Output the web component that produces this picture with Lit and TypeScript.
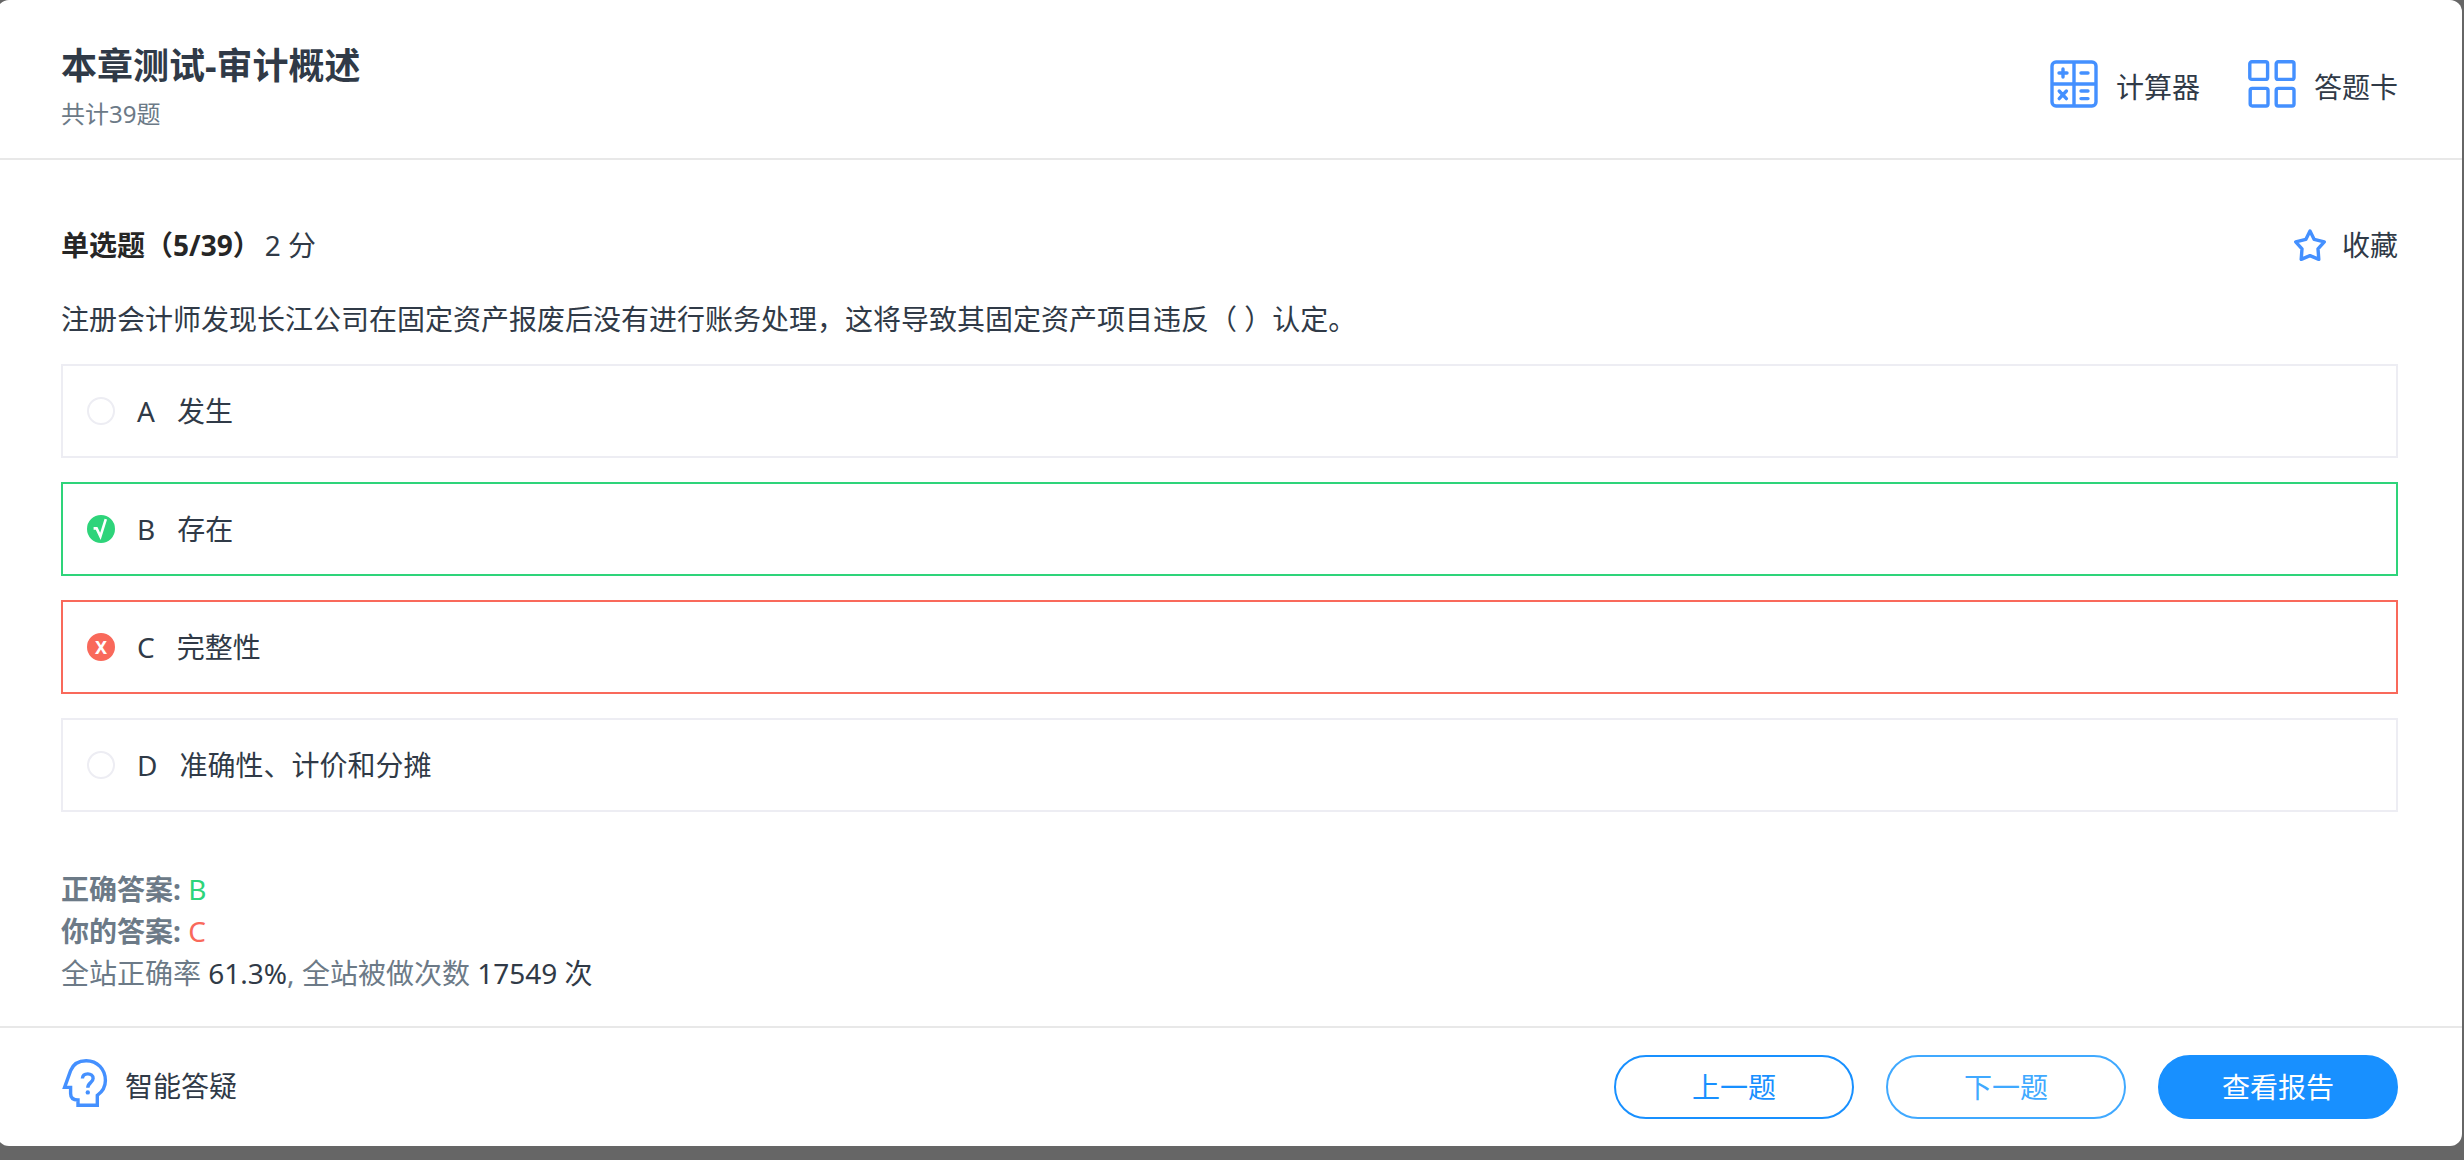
import { LitElement, html, css, svg, nothing } from "lit";
import { customElement, property, state } from "lit/decorators.js";
import { classMap } from "lit/directives/class-map.js";

type Mark = "none" | "right" | "wrong";

interface Option {
  key: string;
  text: string;
  mark: Mark;
}

const calculatorIcon = svg`
  <rect x="2" y="2" width="44" height="44" rx="4" />
  <path d="M24 2V46M2 24H46" />
  <path stroke-linecap="round" d="M13 9V17M9 13H17M31 13H38M9.2 31L16.4 38.6M16.4 31L9.2 38.6M31 31H38M31 38.6H38" />
`;

const gridIcon = svg`
  <rect x="1.8" y="1.8" width="17.8" height="17.6" rx="2" />
  <rect x="28.2" y="1.8" width="17.8" height="17.6" rx="2" />
  <rect x="2.2" y="28.4" width="17.8" height="17.6" rx="2" />
  <rect x="28.2" y="28.4" width="17.8" height="17.6" rx="2" />
`;

const headIcon = svg`
  <path d="M25.2 1.7C17.6 1.7 12 5.4 9.6 11.6L3.6 28.4H9.6V34.5C9.6 38.6 12 41 17 41V46.3H36.3V36.3C42 32.4 44.4 27.4 44.4 21.5C44.4 10.2 36.4 1.7 25.2 1.7Z" />
  <path d="M21.4 19.5C21.6 16.6 23.8 14.9 26.8 14.9C29.8 14.9 32.1 16.7 32.1 19.4C32.1 21.3 31 22.4 29.6 23.6C27.8 25.1 26.8 26.2 26.8 28.8" />
  <circle cx="26.8" cy="33.4" r="2.2" fill="currentColor" stroke="none" />
`;

const starIcon = svg`
  <path
    stroke-linejoin="round"
    d="M16 1.9L20.2 10.4L30.3 12.9L24 19.8L24.8 30.4L16 26.6L7.2 30.4L8 19.8L1.7 12.9L11.8 10.4Z"
  />
`;

@customElement("quiz-option")
export class QuizOption extends LitElement {
  @property({ attribute: false }) option!: Option;
  @property({ type: Boolean }) checked = false;

  static styles = css`
    :host {
      display: block;
    }
    .option {
      display: flex;
      align-items: center;
      gap: 22px;
      padding: 24px;
      border: 2px solid #ededf3;
      line-height: 42px;
    }
    .option.right {
      border-color: #2ed47a;
    }
    .option.wrong {
      border-color: #f9695b;
    }
    .dot {
      display: grid;
      place-items: center;
      width: 28px;
      height: 28px;
    }
    .radio {
      grid-area: 1 / 1;
      box-sizing: border-box;
      appearance: none;
      width: 28px;
      height: 28px;
      margin: 0;
      border: 2px solid #ededf3;
      border-radius: 50%;
    }
    .right .radio {
      border-color: #2ed47a;
      background: #2ed47a;
    }
    .wrong .radio {
      border-color: #f9695b;
      background: #f9695b;
    }
    .sign {
      grid-area: 1 / 1;
      z-index: 1;
      color: #fff;
      font-size: 18px;
      font-weight: 700;
      line-height: 28px;
    }
    .check {
      grid-area: 1 / 1;
      z-index: 1;
      width: 28px;
      height: 28px;
      fill: none;
      stroke: #fff;
      stroke-width: 2.6;
    }
  `;

  private renderMark(mark: Mark) {
    if (mark === "right") {
      return html`<svg class="check" viewBox="0 0 28 28" aria-hidden="true">
        <path d="M6.6 13.4H9.6L13.4 21.4L18.8 4.2" />
      </svg>`;
    }
    return mark === "wrong" ? html`<span class="sign" aria-hidden="true">X</span>` : nothing;
  }

  render() {
    const { key, text, mark } = this.option;
    return html`
      <label class=${classMap({ option: true, right: mark === "right", wrong: mark === "wrong" })}>
        <span class="dot">
          <input class="radio" type="radio" name="answer" .value=${key} .checked=${this.checked} />
          ${this.renderMark(mark)}
        </span>
        <span>${key}</span>
        <span>${text}</span>
      </label>
    `;
  }
}

@customElement("app-root")
export class AppRoot extends LitElement {
  @state() private options: Option[] = [
    { key: "A", text: "发生", mark: "none" },
    { key: "B", text: "存在", mark: "right" },
    { key: "C", text: "完整性", mark: "wrong" },
    { key: "D", text: "准确性、计价和分摊", mark: "none" },
  ];

  static styles = css`
    :host {
      display: flex;
      box-sizing: border-box;
      min-height: 100vh;
      padding: 0 2px 14px 0;
      background: #666;
      color: #303a47;
      font-family: "Noto Sans", "Noto Sans CJK SC", sans-serif;
      font-size: 28px;
      line-height: 42px;
    }
    .card {
      flex: 1;
      display: flex;
      flex-direction: column;
      margin-left: -3px;
      border-radius: 12px;
      background: #fff;
    }
    .header,
    .footer {
      display: flex;
      align-items: flex-start;
      justify-content: space-between;
      padding: 0 64px;
    }
    .header {
      padding-top: 42px;
      padding-bottom: 26px;
      border-bottom: 2px solid #e8e8e8;
    }
    .title {
      margin: 0 0 6px;
      font-size: 36px;
      line-height: 48px;
    }
    .count {
      margin: 0;
      color: #6c7a87;
      font-size: 24px;
      line-height: 36px;
    }
    .tools {
      display: flex;
      gap: 48px;
      padding-top: 18px;
    }
    .tool {
      display: flex;
      align-items: flex-end;
      gap: 16px;
      padding: 0;
      border: 0;
      background: none;
      color: inherit;
      font: inherit;
      cursor: pointer;
    }
    .tools .tool {
      gap: 18px;
    }
    .bar .tool {
      align-items: center;
    }
    .footer .tool {
      padding-top: 4px;
    }
    .icon {
      flex: none;
      width: 48px;
      height: 48px;
      fill: none;
      stroke: currentColor;
      stroke-width: 3.4;
      color: #4490ff;
    }
    .star {
      width: 32px;
      height: 32px;
    }
    .main {
      flex: 1;
      padding: 64px 64px 32px;
    }
    .bar {
      display: flex;
      align-items: center;
      justify-content: space-between;
      margin-bottom: 32px;
    }
    .kind {
      display: flex;
      gap: 4px;
      margin: 0;
      font-size: 28px;
      font-weight: 400;
    }
    .kind-name {
      color: #262626;
      font-weight: 700;
    }
    .question {
      margin: 0 0 24px;
    }
    .options {
      display: grid;
      gap: 24px;
      margin: 0 0 56px;
      padding: 0;
      border: 0;
    }
    .line {
      margin: 0;
      color: #6c7a87;
    }
    .value {
      color: #303a47;
    }
    .good {
      color: #2ed47a;
    }
    .bad {
      color: #f9695b;
    }
    .footer {
      padding-top: 27px;
      padding-bottom: 27px;
      border-top: 2px solid #e8e8e8;
    }
    .actions {
      display: flex;
      gap: 32px;
    }
    .button {
      width: 240px;
      height: 64px;
      padding: 0;
      border: 2px solid #1890ff;
      border-radius: 32px;
      background: #fff;
      color: #1890ff;
      font: inherit;
      cursor: pointer;
    }
    .button.soft {
      border-color: #40a9ff;
      color: #40a9ff;
    }
    .button.primary {
      background: #1890ff;
      color: #fff;
    }
  `;

  render() {
    return html`
      <div class="card">
        <header class="header">
          <div>
            <h1 class="title">本章测试-审计概述</h1>
            <p class="count">共计39题</p>
          </div>
          <div class="tools">
            <button class="tool" type="button">
              <svg class="icon" viewBox="0 0 48 48" aria-hidden="true">${calculatorIcon}</svg>
              <span>计算器</span>
            </button>
            <button class="tool" type="button">
              <svg class="icon" viewBox="0 0 48 48" aria-hidden="true">${gridIcon}</svg>
              <span>答题卡</span>
            </button>
          </div>
        </header>

        <main class="main">
          <div class="bar">
            <h2 class="kind"><span class="kind-name">单选题（5/39）</span><span>2 分</span></h2>
            <button class="tool" type="button">
              <svg class="icon star" viewBox="0 0 32 32" aria-hidden="true">${starIcon}</svg>
              <span>收藏</span>
            </button>
          </div>
          <p class="question" id="question">
            注册会计师发现长江公司在固定资产报废后没有进行账务处理，这将导致其固定资产项目违反（ ）认定。
          </p>
          <fieldset class="options" aria-labelledby="question">
            ${this.options.map(
              (option) => html`
                <quiz-option .option=${option} ?checked=${option.mark === "wrong"}></quiz-option>
              `
            )}
          </fieldset>
          <p class="line"><b>正确答案:</b> <span class="good">B</span></p>
          <p class="line"><b>你的答案:</b> <span class="bad">C</span></p>
          <p class="line">
            全站正确率 <span class="value">61.3%</span>, 全站被做次数 <span class="value">17549 次</span>
          </p>
        </main>

        <footer class="footer">
          <button class="tool" type="button">
            <svg class="icon" viewBox="0 0 48 48" aria-hidden="true">${headIcon}</svg>
            <span>智能答疑</span>
          </button>
          <div class="actions">
            <button class="button" type="button">上一题</button>
            <button class="button soft" type="button">下一题</button>
            <button class="button primary" type="button">查看报告</button>
          </div>
        </footer>
      </div>
    `;
  }
}
